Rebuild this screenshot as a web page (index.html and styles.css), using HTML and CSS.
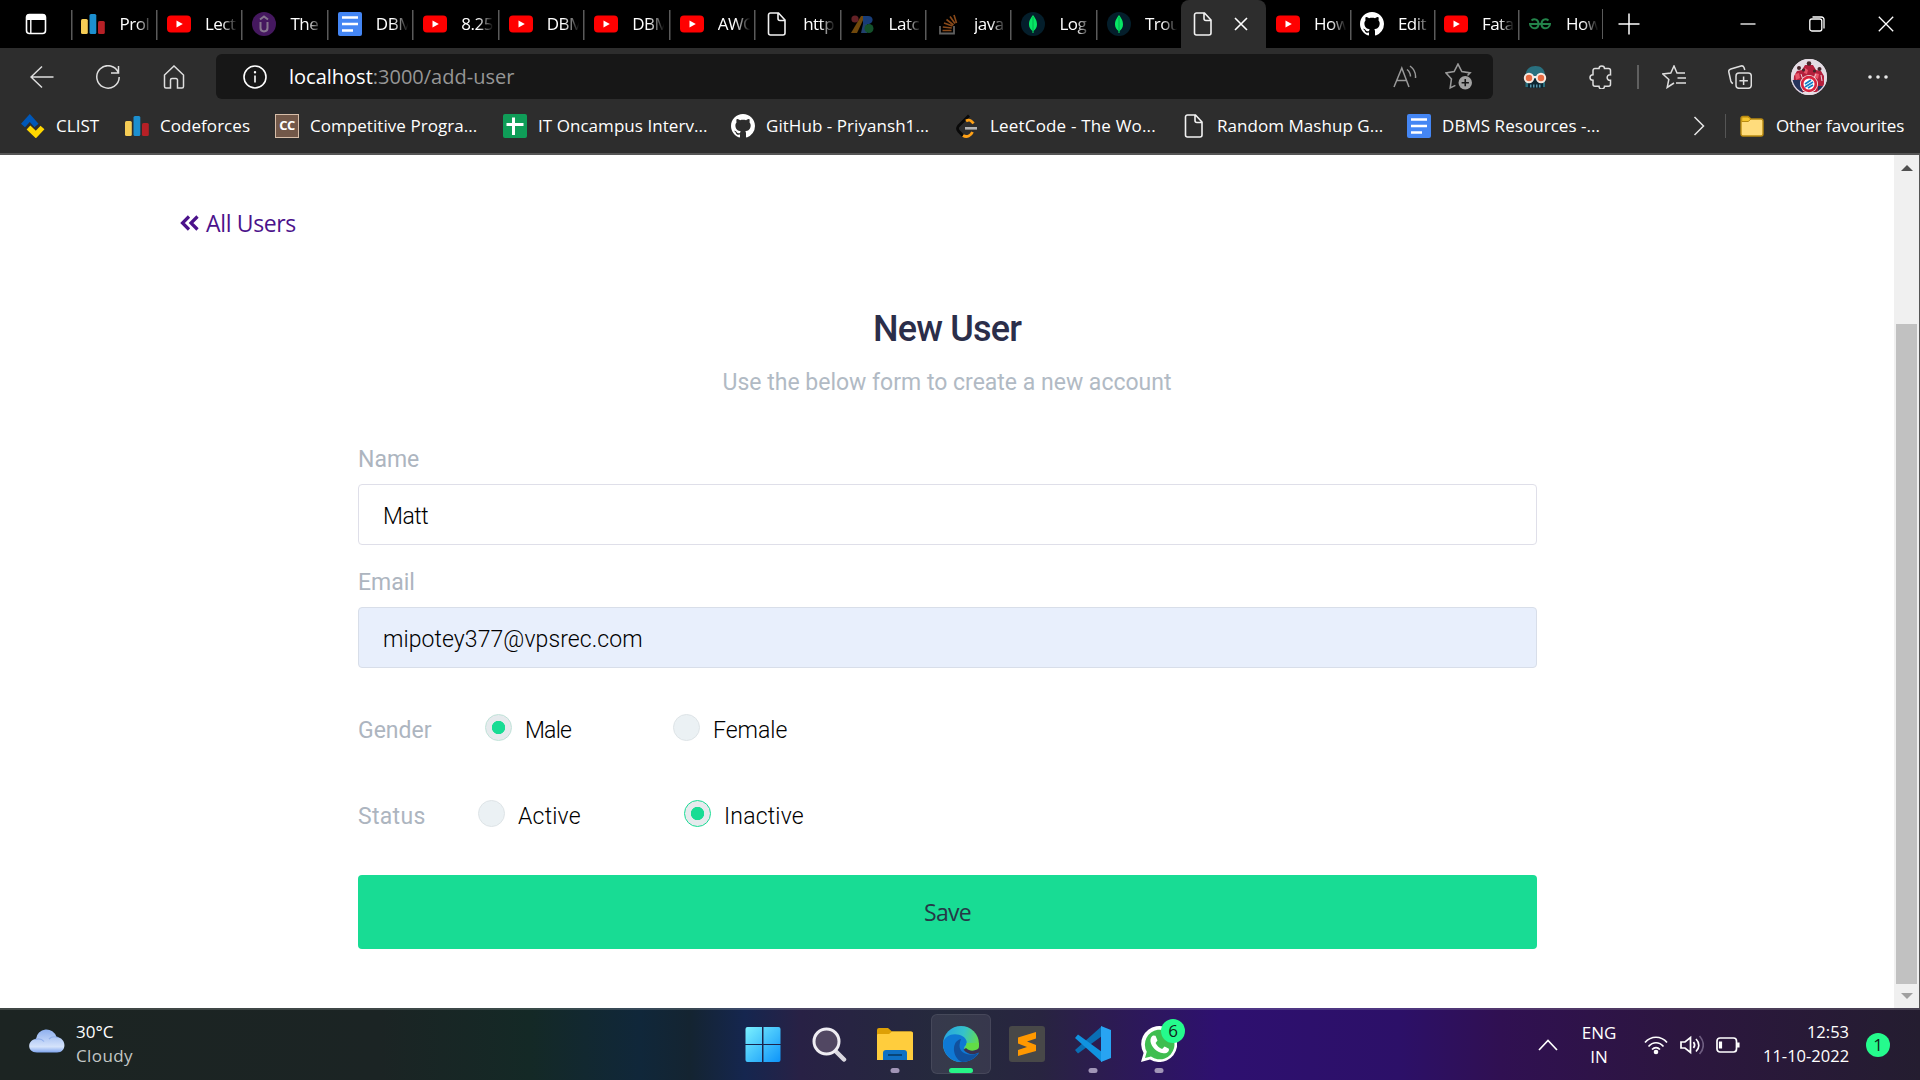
FILE: index.html
```html
<!DOCTYPE html>
<html lang="en">
<head>
<meta charset="utf-8">
<title>Add user</title>
<link rel="stylesheet" href="styles.css">
</head>
<body>
<svg class="defs" aria-hidden="true">
  <symbol id="bars" viewBox="0 0 24 24"><rect x="0" y="7" width="6.8" height="15" rx="1.5" fill="#f5cc55"/><rect x="8.5" y="2" width="6.8" height="20" rx="1.5" fill="#1c8fcf"/><rect x="17" y="9" width="6.8" height="13" rx="1.5" fill="#b62026"/></symbol>
  <symbol id="youtube" viewBox="0 0 24 24"><rect x="0" y="3.5" width="24" height="17" rx="4" fill="#f00"/><path d="M9.5 8.5v7l6.3-3.5z" fill="#fff"/></symbol>
  <symbol id="udemy" viewBox="0 0 24 24"><circle cx="12" cy="12" r="12" fill="#45185f"/><path d="M8.5 10v6c0 4.500 7 4.500 7 0v-6M8 7.500l4-3 4 3" fill="none" stroke="#86768e" stroke-width="2"/></symbol>
  <symbol id="docs" viewBox="0 0 24 24"><rect width="24" height="24" rx="2" fill="#4486f4"/><path d="M4 5.500h16M4 12h16M4 18.500h11" stroke="#fff" stroke-width="2.600"/></symbol>
  <symbol id="file" viewBox="0 0 24 24"><path d="M5.500 1h8l6.500 7v13a2 2 0 0 1-2 2H5.500a2 2 0 0 1-2-2V3a2 2 0 0 1 2-2zM13 1v5.500a2 2 0 0 0 2 2h5" fill="none" stroke="#f2f2f2" stroke-width="1.600"/></symbol>
  <symbol id="latex" viewBox="0 0 24 24"><path d="M10 4h4L6 21H0z" fill="#70480b"/><circle cx="4" cy="7" r="3.600" fill="#642126"/><path d="M12 4h5c6 0 6 7 1 8h-6z" fill="#173c78"/><path d="M12 12h4v9h-6z" fill="#22406d"/><circle cx="18" cy="16.500" r="4.500" fill="#14512b"/></symbol>
  <symbol id="stack" viewBox="0 0 24 24"><path d="M4 14v7.500h14V14" fill="none" stroke="#606060" stroke-width="1.800"/><path d="M6.500 18.500h9M6.800 15l9 1M8 11l8.500 3M10.500 7.500l7 5.500M14 4.500l5 7M18 3l2.500 8" stroke="#8a4a1a" stroke-width="1.600"/></symbol>
  <symbol id="mongo" viewBox="0 0 24 24"><circle cx="12" cy="12" r="12" fill="#041e2b"/><path d="M12 3c2 3 4 5 4 9.500 0 3-1.500 5-3.500 6.500v2h-1v-2C9.500 17.500 8 15.500 8 12.500 8 8 10 6 12 3z" fill="#07e765"/><path d="M12 5v14" stroke="#00a34a" stroke-width=".8"/></symbol>
  <symbol id="github" viewBox="0 0 16 16"><path fill="#fff" d="M8 0C3.580 0 0 3.580 0 8c0 3.540 2.290 6.530 5.470 7.590.4.070.55-.17.55-.38 0-.19-.01-.82-.01-1.490-2.010.37-2.530-.49-2.690-.94-.09-.23-.48-.94-.82-1.130-.28-.15-.68-.52-.01-.53.63-.01 1.080.58 1.230.82.72 1.210 1.870.87 2.330.66.07-.52.28-.87.51-1.070-1.780-.2-3.640-.89-3.640-3.950 0-.87.31-1.590.82-2.150-.08-.2-.36-1.020.08-2.120 0 0 .67-.21 2.200.82.64-.18 1.320-.27 2-.27s1.360.09 2 .27c1.530-1.040 2.200-.82 2.200-.82.44 1.100.16 1.920.08 2.120.51.56.82 1.270.82 2.150 0 3.070-1.870 3.750-3.650 3.950.29.25.54.73.54 1.480 0 1.070-.01 1.930-.01 2.200 0 .21.15.46.55.38A8.010 8.010 0 0 0 16 8c0-4.420-3.580-8-8-8z"/></symbol>
  <symbol id="gfg" viewBox="0 0 24 24"><path d="M3.500 8.500c3-2.500 7-1 7 3.500s-4 5-6.500 3.500c-2-1.300-2-3.500-2-3.500h20s0 2.200-2 3.500c-2.500 1.500-6.500 1-6.500-3.500s4-6 7-3.500" fill="none" stroke="#23834a" stroke-width="2"/></symbol>
  <symbol id="clist" viewBox="0 0 24 24"><path d="M2 11.500l6.800-7.500 6.700 7.500" fill="none" stroke="#0057b8" stroke-width="5.400"/><path d="M7.500 13.500l7.300 7L21.500 13.500" fill="none" stroke="#ffd700" stroke-width="5.400"/></symbol>
  <symbol id="sheets" viewBox="0 0 24 24"><rect width="24" height="24" rx="2" fill="#0f9d58"/><path d="M3.500 10.500h17M10.500 3.500v17.500" stroke="#fff" stroke-width="3"/></symbol>
  <symbol id="leet" viewBox="0 0 24 24"><path d="M14 1.500L3.500 12c-1.500 2-1.200 3.500 0 5l4.500 4.800" fill="none" stroke="#090909" stroke-width="2.800"/><path d="M11 7c3-2 5-1 7.500 2.500M8 21.500c4 2.500 8 0 9.500-3.500" fill="none" stroke="#ffa116" stroke-width="2.800"/><path d="M10 14.300h12" stroke="#b3b3b3" stroke-width="2.600"/></symbol>
  <symbol id="folder" viewBox="0 0 24 24"><path d="M1 4.500A2 2 0 0 1 3 2.500h5l3 2.500h10a2 2 0 0 1 2 2V20a2 2 0 0 1-2 2H3a2 2 0 0 1-2-2z" fill="#ffdc7c" stroke="#b98a11" stroke-width="1.400"/><path d="M1.700 7.500h6.500L11 5 8 3H3c-1.300 0-1.300 1-1.300 4.500z" fill="#f5c52d" stroke="#b98a11" stroke-width="1"/></symbol>
</svg>

<header class="tabstrip">
  <div class="tab-menu"><svg viewBox="0 0 24 24"><rect x="2.500" y="2.500" width="19" height="19" rx="3" fill="none" stroke="#fff" stroke-width="1.600"/><path d="M2.500 8V5a3 3 0 0 1 3-3h13a3 3 0 0 1 3 3v3z" fill="#fff"/><path d="M6.800 8v13.500" stroke="#fff" stroke-width="1.400"/></svg></div>
  <nav class="tabs">
    <div class="tab first"><svg><use href="#bars"/></svg><span>Prol</span></div>
    <div class="tab"><svg><use href="#youtube"/></svg><span>Lect</span></div>
    <div class="tab"><svg><use href="#udemy"/></svg><span>The</span></div>
    <div class="tab"><svg><use href="#docs"/></svg><span>DBM</span></div>
    <div class="tab"><svg><use href="#youtube"/></svg><span>8.25</span></div>
    <div class="tab"><svg><use href="#youtube"/></svg><span>DBM</span></div>
    <div class="tab"><svg><use href="#youtube"/></svg><span>DBM</span></div>
    <div class="tab"><svg><use href="#youtube"/></svg><span>AWC</span></div>
    <div class="tab"><svg><use href="#file"/></svg><span>http</span></div>
    <div class="tab"><svg><use href="#latex"/></svg><span>Latc</span></div>
    <div class="tab"><svg><use href="#stack"/></svg><span>java</span></div>
    <div class="tab"><svg><use href="#mongo"/></svg><span>Log</span></div>
    <div class="tab"><svg><use href="#mongo"/></svg><span>Trou</span></div>
    <div class="tab active"><svg><use href="#file"/></svg><svg class="tab-close" viewBox="0 0 14 14"><path d="M1 1l12 12M13 1L1 13" stroke="#fff" stroke-width="1.600"/></svg></div>
    <div class="tab narrow bare"><svg><use href="#youtube"/></svg><span>How</span></div>
    <div class="tab narrow"><svg><use href="#github"/></svg><span>Edit</span></div>
    <div class="tab narrow"><svg><use href="#youtube"/></svg><span>Fata</span></div>
    <div class="tab narrow"><svg><use href="#gfg"/></svg><span>How</span></div>
  </nav>
  <div class="new-tab"><svg viewBox="0 0 22 22"><path d="M11 .5v21M.5 11h21" stroke="#fff" stroke-width="1.500"/></svg></div>
  <div class="window-buttons">
    <svg viewBox="0 0 16 16"><path d="M.5 8h15" stroke="#fff" stroke-width="1.300"/></svg>
    <svg viewBox="0 0 16 16"><rect x=".8" y="3" width="12" height="12" rx="2" fill="none" stroke="#fff" stroke-width="1.300"/><path d="M3.500 1h9a2.500 2.500 0 0 1 2.500 2.500v9" fill="none" stroke="#fff" stroke-width="1.300"/></svg>
    <svg viewBox="0 0 16 16"><path d="M.8.8l14.400 14.400M15.200.8L.8 15.200" stroke="#fff" stroke-width="1.300"/></svg>
  </div>
</header>

<div class="toolbar">
  <div class="nav-buttons line-icons">
    <svg viewBox="0 0 24 24"><path d="M23.500 12H1M12 1.500L1 12l11 10.500"/></svg>
    <svg viewBox="0 0 24 24"><path d="M22.500 8A11.200 11.200 0 1 0 23.200 12M22.500 1v7h-7.500"/></svg>
    <svg viewBox="0 0 24 24"><path d="M2.500 10L12 1l9.500 9v11.500a1.500 1.500 0 0 1-1.500 1.500h-4.500v-8a1.500 1.500 0 0 0-1.500-1.500h-4A1.500 1.500 0 0 0 8.500 15v8H4a1.500 1.500 0 0 1-1.500-1.500z"/></svg>
  </div>
  <div class="address">
    <svg viewBox="0 0 24 24"><circle cx="12" cy="12" r="11" fill="none" stroke="#fff" stroke-width="1.600"/><path d="M12 10.500v7" stroke="#fff" stroke-width="1.600"/><circle cx="12" cy="7.300" r="1.200" fill="#fff"/></svg>
    <p class="url"><b>localhost</b>:3000/add-user</p>
    <svg class="dim" viewBox="0 0 24 24"><path d="M1 22L8.800 3l7.200 19M4 15.500h9.500M14 4.500c2.500 2 3.500 4 3.500 7M17 1c4 3 6 7 5.500 12"/></svg>
    <svg class="dim star" viewBox="0 0 26 26"><path d="M10 21.500L5 24l1.200-8.500L.8 9.500l8-1.300L12.500 1l3.700 7.200 8 1.300-2.500 2.500"/><circle cx="19.500" cy="19" r="6.500" fill="#a2a2a2" stroke="none"/><path d="M19.500 15.500v7M16 19h7" stroke="#171717"/></svg>
  </div>
  <div class="actions line-icons">
    <svg class="robot" viewBox="0 0 24 24"><path d="M2.500 22V11C2.500 4 7 1 12.500 1S22 4 22 11v11z" fill="#29707f" stroke="none"/><path d="M5 14h15v9H5z" fill="#0d2733" stroke="none"/><path d="M7 21h11" stroke="#5795aa" stroke-width="3" stroke-dasharray="1.500 1.500"/><path d="M2 12h20" stroke="#eee" stroke-width="2"/><circle cx="6" cy="13" r="4.200" fill="#e96c43" stroke="#f6e8e0" stroke-width="2"/><circle cx="18" cy="13" r="4.200" fill="#e96c43" stroke="#f6e8e0" stroke-width="2"/></svg>
    <svg class="puzzle" viewBox="0 0 24 24"><path d="M6 3.500h4c0-3.500 5.500-3.500 5.500 0h4a2 2 0 0 1 2 2v4.300c-4.500-.5-4.500 6 0 5.500v4a2 2 0 0 1-2 2h-4c0 3.500-5.500 3.500-5.500 0H6a2 2 0 0 1-2-2v-4c-4 0-4-5.500 0-5.500V5.500a2 2 0 0 1 2-2z"/></svg>
    <i class="rule"></i>
    <svg class="favourites" viewBox="0 0 24 24"><path d="M12 18l-6.800 4.500 1.600-8L.8 9l8-1L12 1l3 7h8M15.500 13H24M14 18h10"/></svg>
    <svg class="collections" viewBox="0 0 24 24"><rect x="8" y="8" width="15.300" height="15.300" rx="3"/><path d="M15.600 11.500v8.500M11.400 15.700h8.500M5 18.500c-1.500-.5-1.800-1-2.200-2.500L.8 7c-.3-1.500.3-2.500 2-3L13 1c1.500-.4 2.500.3 3 1.500l.8 2.500"/></svg>
    <svg class="avatar" viewBox="0 0 36 36"><defs><clipPath id="round"><circle cx="18" cy="18" r="18"/></clipPath></defs><g clip-path="url(#round)" stroke="none"><path d="M0 0h36v36H0z" fill="#e4dce4"/><path d="M3 17l3-5 5-1 3-5h8l3 5 5 1 3 5v16H2z" fill="#b41f3c"/><path d="M1 21h8l3 13H0zM27 27h9v9h-9z" fill="#26335c"/><path d="M4 15l4-1 1 5-4 2zM24 14l4 1-1 5-4-2zM14 9l3 2-1 4-3-1z" fill="#e9566a"/><path d="M10 15l2 6M25 15l-2 4M30 16l1 6" stroke="#ead0d8" stroke-width="1"/><g fill="#46252a"><circle cx="8" cy="9" r="2"/><circle cx="18" cy="4.500" r="2.300"/><circle cx="28.500" cy="10" r="2"/><circle cx="12.500" cy="11" r="1.600"/><circle cx="23.500" cy="12" r="1.600"/></g><circle cx="18" cy="25" r="9" fill="#f2f2f2"/><circle cx="18" cy="25" r="8.200" fill="#d8233e"/><circle cx="18" cy="25" r="5.500" fill="#fff"/><path d="M14 25l6-4M14 28l8-5M17 29l5-3" stroke="#1481c8" stroke-width="1.700"/></g><circle cx="18" cy="18" r="17.300" stroke="#e4dce4" stroke-width="1.200"/></svg>
    <svg class="menu" viewBox="0 0 24 24"><g fill="#e8e8e8" stroke="none"><circle cx="4" cy="12" r="1.800"/><circle cx="12" cy="12" r="1.800"/><circle cx="20" cy="12" r="1.800"/></g></svg>
  </div>
</div>

<div class="bookmarks">
  <div class="bookmark-list">
    <a><svg><use href="#clist"/></svg>CLIST</a>
    <a><svg><use href="#bars"/></svg>Codeforces</a>
    <a><span class="cc">CC</span>Competitive Progra...</a>
    <a><svg><use href="#sheets"/></svg>IT Oncampus Interv...</a>
    <a><svg><use href="#github"/></svg>GitHub - Priyansh1...</a>
    <a class="airy"><svg><use href="#leet"/></svg>LeetCode - The Wo...</a>
    <a><svg><use href="#file"/></svg>Random Mashup G...</a>
    <a><svg><use href="#docs"/></svg>DBMS Resources -...</a>
  </div>
  <svg class="more" viewBox="0 0 12 20"><path d="M1.500 1l9 9-9 9" fill="none" stroke="#e6e6e6" stroke-width="1.500"/></svg>
  <a class="other"><svg><use href="#folder"/></svg>Other favourites</a>
</div>

<div class="viewport">
  <main class="page">
    <a class="back"><svg viewBox="0 0 19 16"><path d="M9 1.500L2.500 8 9 14.500M17.500 1.500L11 8l6.500 6.500" fill="none" stroke="#4b128b" stroke-width="3.200"/></svg>All Users</a>
    <h1>New User</h1>
    <p class="subtitle">Use the below form to create a new account</p>
    <form class="form">
      <label class="label">Name</label>
      <div class="input"><span class="tight">Matt</span></div>
      <label class="label">Email</label>
      <div class="input filled">mipotey377@vpsrec.com</div>
      <div class="choices gender">
        <span class="label">Gender</span>
        <label class="choice"><i class="radio on"></i><span class="tight">Male</span></label>
        <label class="choice"><i class="radio"></i>Female</label>
      </div>
      <div class="choices status">
        <span class="label">Status</span>
        <label class="choice"><i class="radio"></i>Active</label>
        <label class="choice"><i class="radio on focus"></i>Inactive</label>
      </div>
      <div class="save">Save</div>
    </form>
  </main>
  <aside class="scrollbar"><i class="up"></i><i class="thumb"></i><i class="down"></i></aside>
</div>

<footer class="taskbar">
  <div class="weather">
    <svg viewBox="0 0 36 24"><defs><linearGradient id="cl" x1="0" y1="0" x2="0" y2="1"><stop offset="0" stop-color="#8fb0ef"/><stop offset=".75" stop-color="#d5e3fb"/><stop offset="1" stop-color="#7fa5ee"/></linearGradient></defs><path d="M7 10a10.500 10.500 0 0 1 20.500-2C38 9 38 23.500 28 23.500H8C-2.500 23.500-2 11 7 10z" fill="url(#cl)"/><path d="M6 10.500c4-1.500 7-.5 9 2M20 10c2-2 5-3 9-1.500" fill="none" stroke="#91afeb" stroke-width="1.200"/></svg>
    <div class="lines"><span>30°C</span><span class="soft">Cloudy</span></div>
  </div>
  <div class="apps">
    <div class="app"><svg viewBox="0 0 36 36"><defs><linearGradient id="win" x1="0" y1="0" x2="36" y2="36" gradientUnits="userSpaceOnUse"><stop offset="0" stop-color="#7df3ff"/><stop offset="1" stop-color="#0c93f9"/></linearGradient></defs><path d="M2.500 1H17v17H.5V3a2 2 0 0 1 2-2zM18.500 1H33.500a2 2 0 0 1 2 2V18h-17zM.5 19H17v17H2.500a2 2 0 0 1-2-2zM18.500 19h17v15a2 2 0 0 1-2 2h-15z" fill="url(#win)"/></svg></div>
    <div class="app"><svg viewBox="0 0 36 36"><path d="M24.500 25l8.500 8.500" stroke="#d9d7df" stroke-width="4.500" stroke-linecap="round"/><circle cx="15.500" cy="15.500" r="12.500" fill="#514762" stroke="#efedf3" stroke-width="3"/></svg></div>
    <div class="app open"><svg viewBox="0 0 36 36"><path d="M0 4a2 2 0 0 1 2-2h9l4 3.500h19a2 2 0 0 1 2 2V14H0z" fill="#dda006"/><path d="M0 9q0-1 1-1h11l3-2.500h19q2 0 2 2V34H0z" fill="#ffcd3d"/><path d="M6 34v-7a3 3 0 0 1 3-3h18a3 3 0 0 1 3 3v7z" fill="#0f70c4"/><path d="M11 29h14" stroke="#084579" stroke-width="2"/></svg></div>
    <div class="app current"><svg viewBox="0 0 36 36"><defs><linearGradient id="eg" x1="0" y1=".3" x2="1" y2=".6"><stop offset="0" stop-color="#27a5e0"/><stop offset=".5" stop-color="#35c2ca"/><stop offset="1" stop-color="#69e13c"/></linearGradient></defs><circle cx="18" cy="18" r="18" fill="url(#eg)"/><path d="M0 17C2 8 13 6 20 10.500c4 2.500 5 7 2 9.500-1.500 1.500-.5 4 3 4.500 4 .5 6-1 11 2.200C32 33 26 36 18 36 8 36 0 28 0 17z" fill="#0f79d4"/><path d="M18 13c-10 2-9 19 1 22.900C27 36 33 31.500 35 27c-7 4-19 1-18.500-8 .1-2 .8-4 1.500-6z" fill="#11509d"/><path d="M36 19c0 7-10 7-14.500 4.500-1.500-1 2.500-2 2-6.500H36z" fill="#62dd46"/><path d="M34.500 27c-5 2.500-10 1.300-14-3.200L23 22c4 4 9 3 12.500.5L39 25z" fill="#3a3150"/></svg></div>
    <div class="app"><svg viewBox="0 0 36 36"><rect width="36" height="36" rx="3" fill="#484848"/><path d="M9 11.500L27 6v6.500l-9 3 9 3.500v6L9 30v-6l9-3-9-3.500z" fill="#ff9800"/></svg></div>
    <div class="app open"><svg viewBox="0 0 36 36"><path d="M0 24l3 3.500L27 10V0z" fill="#0a6eb4"/><path d="M0 12l3-3.500L27 26v10z" fill="#1093e0"/><path d="M26 0l10 4v28l-10 4z" fill="#28a4f2"/></svg></div>
    <div class="app open"><svg viewBox="0 0 36 36"><path d="M0 36l2.600-9A18 18 0 1 1 9 33.500z" fill="#fff"/><path d="M4 32l1.800-6.200A14.800 14.800 0 1 1 10 30.500z" fill="#3fbe50"/><path d="M12 9.500l2.500.3 2 4.700-1.900 2.600c1.500 3 3.500 4.700 6.500 5.900l2.500-2.500 4.300 2.200c.5 3-2.400 5-5.400 4.600C15 26 10.500 21 9.500 15.500c-.3-2.800.8-5 2.500-6z" fill="#fff"/></svg><b class="count">6</b></div>
  </div>
  <div class="tray">
    <svg class="chev" viewBox="0 0 20 12"><path d="M1 11l9-9.500L19 11"/></svg>
    <div class="lines lang"><span>ENG</span><span>IN</span></div>
    <svg class="wifi" viewBox="0 0 24 20"><path d="M1 7.500c6-7 16-7 22 0M4.500 11.500c4.500-5 10.500-5 15 0M8 14.500c2.500-2.500 5.500-2.500 8 0"/><circle cx="12" cy="17" r="2.300" fill="#fff" stroke="none"/></svg>
    <svg class="sound" viewBox="0 0 24 20"><path d="M1 7v6h4l5.500 4.500v-15L5 7zM13.500 7c1.500 2 1.500 4 0 6M16 4c4 4 3.500 9 0 12.500"/><path d="M19.500 1c5 5.500 5 12.500 0 18" stroke="#6e5d80"/></svg>
    <svg class="battery" viewBox="0 0 24 20"><rect x="1" y="3" width="19.500" height="14" rx="3"/><path d="M4.500 6.500v7" stroke-width="3.200"/><path d="M22.300 7.500v5" stroke-width="2.500"/></svg>
    <div class="lines clock"><span>12:53</span><span>11-10-2022</span></div>
    <b class="notice">1</b>
  </div>
</footer>
</body>
</html>
```
FILE: styles.css
```css
* { box-sizing: border-box; }
body {
  margin: 0;
  width: 1920px;
  height: 1080px;
  overflow: hidden;
  display: flex;
  flex-direction: column;
  background: #fff;
  font-family: "Open Sans", "Noto Sans", sans-serif;
  font-size: 17px;
  color: #fff;
}
svg { display: block; flex: none; width: 24px; height: 24px; }
.defs { position: absolute; width: 0; height: 0; }

/* Tab strip */
.tabstrip { display: flex; height: 48px; background: #000; }
.tab-menu { width: 70.500px; padding: 12px 0 0 24px; }
.tabs { display: flex; }
.tab {
  display: flex;
  align-items: center;
  gap: 14px;
  width: 85.460px;
  padding: 0 0 1px 11px;
  background: linear-gradient(#5a5a5a, #5a5a5a) 0 10px / 1.500px 30px no-repeat;
}
.tab.first { padding-left: 10px; gap: 15px; }
.tab span {
  width: 34px;
  overflow: hidden;
  white-space: nowrap;
  letter-spacing: -.5px;
  -webkit-mask-image: linear-gradient(90deg, #000 50%, transparent 95%);
  mask-image: linear-gradient(90deg, #000 50%, transparent 95%);
}
.tab.narrow { width: 84px; padding-left: 10px; }
.tab.bare { background: none; }
.tab.active { width: 84.500px; background: #2d2d2d; border-radius: 8px 8px 0 0; gap: 19px; padding-left: 10px; }
.tab .tab-close { width: 14px; height: 14px; }
.new-tab { display: flex; align-items: center; padding-left: 15px; border-left: 1.500px solid #5a5a5a; height: 30px; margin-top: 9px; }
.new-tab svg { width: 22px; height: 22px; }
.window-buttons { margin-left: auto; margin-right: 26px; display: flex; align-items: center; gap: 53px; }
.window-buttons svg { width: 16px; height: 16px; }

/* Toolbar */
.toolbar { display: flex; height: 57px; padding-top: 6px; background: #2d2d2d; }
.line-icons svg { fill: none; stroke: #dedede; stroke-width: 1.500; }
.nav-buttons { width: 216px; height: 45px; display: flex; align-items: center; gap: 42px; padding-left: 30px; }
.address { width: 1277px; height: 45px; border-radius: 6px; background: #171717; display: flex; align-items: center; padding: 0 20px 0 27px; }
.url { margin: 0 auto 0 22px; font-size: 20px; color: #969696; }
.url b { font-weight: 400; color: #fff; }
.dim { fill: none; stroke: #999; stroke-width: 1.500; }
.star { width: 27px; height: 27px; margin-left: 28px; margin-right: 1px; }
.actions { flex: 1; height: 45px; display: flex; align-items: center; padding-left: 30px; }
.puzzle, .collections { margin-left: 42px; }
.rule { width: 1.500px; height: 24px; margin-left: 24px; background: #606060; }
.favourites { margin-left: 23px; }
.actions .avatar { width: 36px; height: 36px; margin-left: 39px; }
.menu { margin-left: 39px; }

/* Bookmarks bar */
.bookmarks { display: flex; align-items: center; height: 50px; padding: 0 0 7px 21px; background: #2d2d2d; border-bottom: 2px solid #555; white-space: nowrap; }
.bookmark-list { display: grid; grid-template-columns: 104px 150px 228px 228px 224px 227px 225px 200px; }
.bookmarks a { display: flex; align-items: center; gap: 11px; line-height: 24px; letter-spacing: .05px; }
.bookmarks .airy { letter-spacing: .18px; }
.cc { width: 24px; height: 24px; background: #725849; border: 1px solid #d6bda8; font: 700 13px/21px "Open Sans", sans-serif; text-align: center; letter-spacing: -.5px; }
.bookmarks .more { width: 12px; height: 20px; margin-left: 86px; }
.bookmarks .other { margin-left: 20px; padding-left: 14px; gap: 12px; border-left: 1.500px solid #555; letter-spacing: -.1px; }

/* Page */
.viewport { display: flex; height: 853px; }
.page { width: 1894px; font-family: Roboto, sans-serif; color: #111; }
.back { display: flex; align-items: center; gap: 7px; margin: 52px 0 0 180px; height: 32px; font: 23px/32px "Open Sans", sans-serif; letter-spacing: -.35px; color: #4b128b; }
.back svg { width: 19px; height: 16px; }
h1 { margin: 69px 0 0; text-align: center; font-size: 36px; line-height: 42px; font-weight: 500; letter-spacing: -.8px; color: #2b2e4a; }
.subtitle { margin: 18px 0 0; text-align: center; font-size: 23px; line-height: 30px; color: #b1bac4; }
.form { width: 1179px; margin: 47px 0 0 358px; font-size: 23px; }
.label { display: block; line-height: 30px; color: #adb5bf; }
.input { height: 61px; margin: 9px 0 23px; padding: 2px 24px 0; border: 1px solid #dfdfe9; border-radius: 4px; line-height: 60px; font-weight: 350; letter-spacing: .08px; color: #000; }
.input.filled { background: #e8effc; border-color: #d8dee9; margin-bottom: 48px; }
.input .tight { letter-spacing: -.5px; }
.tight { letter-spacing: -.8px; }
.choices { display: flex; height: 30px; line-height: 30px; margin-bottom: 56px; }
.choice { display: flex; gap: 13px; font-weight: 350; color: #000; }
.gender .label { width: 127px; }
.gender .choice { width: 188px; }
.status .label { width: 120px; letter-spacing: .3px; }
.status .choice { width: 206px; letter-spacing: .2px; }
.radio { width: 27px; height: 27px; margin-top: -2px; border-radius: 50%; border: 1px solid #dee4e7; background: #ebf1f4; }
.radio.on { background: radial-gradient(circle, #18dc94 6.300px, #e6eaed 7px); border-color: #bfe2d8; }
.radio.focus { border-color: #18dc94; }
.save { height: 74px; margin-top: -13px; background: #18dc94; border-radius: 4px; text-align: center; font: 23px/75px "Open Sans", sans-serif; letter-spacing: -.7px; color: #263847; }
.scrollbar { width: 26px; background: #f0f0f0; border-right: 1px solid #555; display: flex; flex-direction: column; align-items: center; }
.up { margin-top: 10px; border: 6px solid transparent; border-top: 0; border-bottom-color: #505050; }
.thumb { width: 21px; height: 660px; margin-top: 153px; background: #c1c1c1; }
.down { margin-top: 9px; border: 6px solid transparent; border-bottom: 0; border-top-color: #a0a0a0; }

/* Taskbar */
.taskbar {
  display: flex;
  height: 72px;
  border-top: 2px solid rgba(255, 255, 255, .16);
  background: linear-gradient(90deg, #1c2422 0, #1b2424 380px, #142926 530px, #10273a 640px, #142431 690px, #15264f 745px, #282145 800px, #252a3c 950px, #282440 1040px, #2c1c50 1100px, #2e1070 1220px, #2c1068 1400px, #301052 1500px, #2c163f 1680px, #241d30 1920px) border-box;
}
.weather { width: 733px; display: flex; gap: 11px; padding: 10px 0 0 29px; }
.weather svg { width: 36px; height: 24px; margin-top: 9px; }
.lines { display: flex; flex-direction: column; line-height: 24px; white-space: nowrap; }
.lines .soft { color: #c3c7c6; letter-spacing: .4px; }
.apps { display: flex; gap: 6px; padding-top: 4px; }
.app { position: relative; width: 60px; height: 60px; padding: 12px; border-radius: 6px; }
.app svg { width: 36px; height: 36px; }
.app.current { background: rgba(255, 255, 255, .08); box-shadow: inset 0 0 0 1px rgba(255, 255, 255, .08); }
.app.open::after, .app.current::after { content: ""; position: absolute; left: 50%; bottom: 1px; width: 9px; height: 5px; border-radius: 3px; transform: translateX(-50%); background: #a195b7; }
.app.current::after { width: 24px; background: #27f687; }
.count, .notice { width: 24px; height: 24px; border-radius: 50%; background: #25fb8d; color: #10231a; font: 17px/24px "Open Sans", sans-serif; text-align: center; }
.count { position: absolute; left: 32px; top: 5px; }
.tray { flex: 1; display: flex; align-items: center; justify-content: flex-end; padding: 0 30px 1px 0; }
.tray svg { fill: none; stroke: #fff; stroke-width: 1.700; height: 20px; }
.tray .chev { width: 20px; height: 12px; margin-right: 23px; }
.lang { width: 36px; text-align: center; margin-right: 27px; }
.wifi, .sound { margin-right: 12px; }
.battery { margin-right: 23px; }
.clock { width: 86px; text-align: right; font-size: 16.500px; margin: 0 17px 2px 0; }
```
